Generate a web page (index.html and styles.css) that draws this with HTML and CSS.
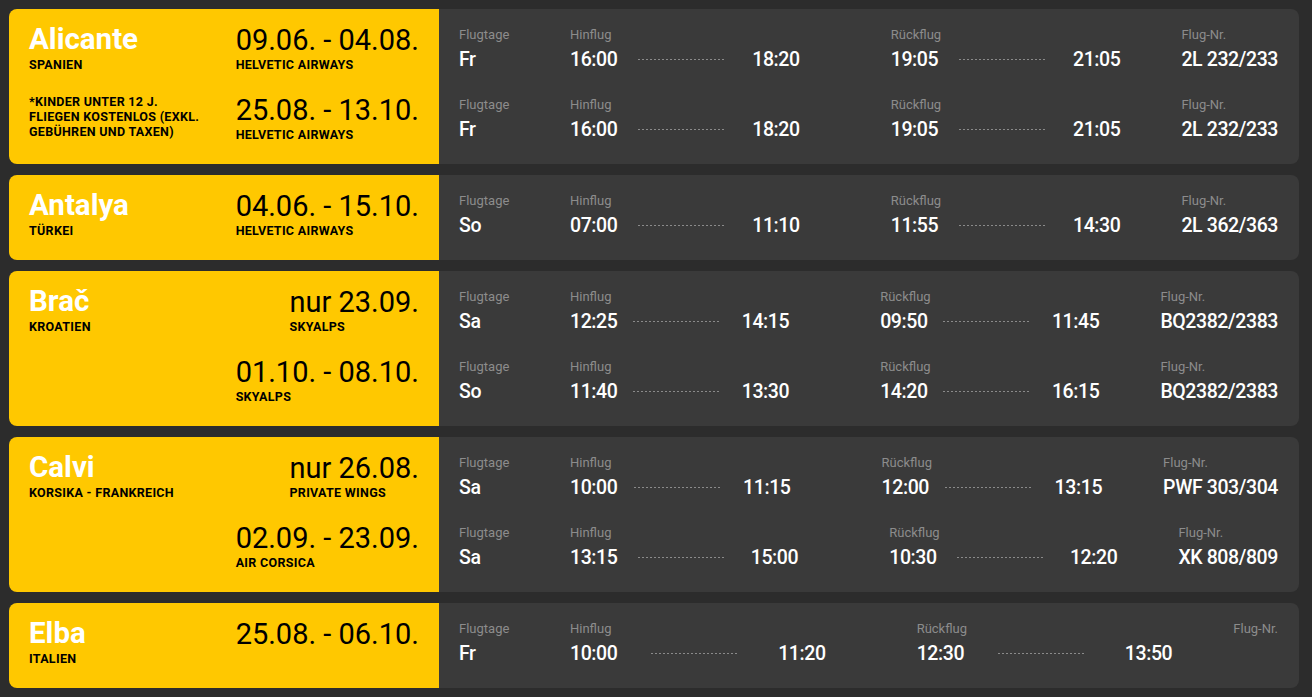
FILE: index.html
```html
<!DOCTYPE html>
<html lang="de">
<head>
<meta charset="utf-8">
<title>Flugplan</title>
<link rel="stylesheet" href="styles.css">
</head>
<body>
<main class="schedule">

  <article class="route">
    <div class="route-info">
      <div class="info-row">
        <div class="place"><h2 class="city">Alicante</h2><p class="country">SPANIEN</p></div>
        <div class="period"><p class="dates">09.06. - 04.08.</p><p class="airline">HELVETIC AIRWAYS</p></div>
      </div>
      <div class="info-row">
        <p class="note">*KINDER UNTER 12 J.<br>FLIEGEN KOSTENLOS (EXKL.<br>GEBÜHREN UND TAXEN)</p>
        <div class="period"><p class="dates">25.08. - 13.10.</p><p class="airline">HELVETIC AIRWAYS</p></div>
      </div>
    </div>
    <div class="route-flights">
      <div class="flight-row">
        <div class="days"><span class="label">Flugtage</span><span class="value">Fr</span></div>
        <div class="leg out"><span class="label">Hinflug</span><div class="times"><span class="value">16:00</span><span class="dots"></span><span class="value">18:20</span></div></div>
        <div class="leg back"><span class="label">Rückflug</span><div class="times"><span class="value">19:05</span><span class="dots"></span><span class="value">21:05</span></div></div>
        <div class="number"><span class="label">Flug-Nr.</span><span class="value">2L 232/233</span></div>
      </div>
      <div class="flight-row">
        <div class="days"><span class="label">Flugtage</span><span class="value">Fr</span></div>
        <div class="leg out"><span class="label">Hinflug</span><div class="times"><span class="value">16:00</span><span class="dots"></span><span class="value">18:20</span></div></div>
        <div class="leg back"><span class="label">Rückflug</span><div class="times"><span class="value">19:05</span><span class="dots"></span><span class="value">21:05</span></div></div>
        <div class="number"><span class="label">Flug-Nr.</span><span class="value">2L 232/233</span></div>
      </div>
    </div>
  </article>

  <article class="route">
    <div class="route-info">
      <div class="info-row">
        <div class="place"><h2 class="city">Antalya</h2><p class="country">TÜRKEI</p></div>
        <div class="period"><p class="dates">04.06. - 15.10.</p><p class="airline">HELVETIC AIRWAYS</p></div>
      </div>
    </div>
    <div class="route-flights">
      <div class="flight-row">
        <div class="days"><span class="label">Flugtage</span><span class="value">So</span></div>
        <div class="leg out"><span class="label">Hinflug</span><div class="times"><span class="value">07:00</span><span class="dots"></span><span class="value">11:10</span></div></div>
        <div class="leg back"><span class="label">Rückflug</span><div class="times"><span class="value">11:55</span><span class="dots"></span><span class="value">14:30</span></div></div>
        <div class="number"><span class="label">Flug-Nr.</span><span class="value">2L 362/363</span></div>
      </div>
    </div>
  </article>

  <article class="route">
    <div class="route-info">
      <div class="info-row">
        <div class="place"><h2 class="city">Brač</h2><p class="country">KROATIEN</p></div>
        <div class="period"><p class="dates">nur 23.09.</p><p class="airline">SKYALPS</p></div>
      </div>
      <div class="info-row">
        <div class="period"><p class="dates">01.10. - 08.10.</p><p class="airline">SKYALPS</p></div>
      </div>
    </div>
    <div class="route-flights">
      <div class="flight-row">
        <div class="days"><span class="label">Flugtage</span><span class="value">Sa</span></div>
        <div class="leg out"><span class="label">Hinflug</span><div class="times"><span class="value">12:25</span><span class="dots"></span><span class="value">14:15</span></div></div>
        <div class="leg back"><span class="label">Rückflug</span><div class="times"><span class="value">09:50</span><span class="dots"></span><span class="value">11:45</span></div></div>
        <div class="number"><span class="label">Flug-Nr.</span><span class="value">BQ2382/2383</span></div>
      </div>
      <div class="flight-row">
        <div class="days"><span class="label">Flugtage</span><span class="value">So</span></div>
        <div class="leg out"><span class="label">Hinflug</span><div class="times"><span class="value">11:40</span><span class="dots"></span><span class="value">13:30</span></div></div>
        <div class="leg back"><span class="label">Rückflug</span><div class="times"><span class="value">14:20</span><span class="dots"></span><span class="value">16:15</span></div></div>
        <div class="number"><span class="label">Flug-Nr.</span><span class="value">BQ2382/2383</span></div>
      </div>
    </div>
  </article>

  <article class="route">
    <div class="route-info">
      <div class="info-row">
        <div class="place"><h2 class="city">Calvi</h2><p class="country">KORSIKA - FRANKREICH</p></div>
        <div class="period"><p class="dates">nur 26.08.</p><p class="airline">PRIVATE WINGS</p></div>
      </div>
      <div class="info-row">
        <div class="period"><p class="dates">02.09. - 23.09.</p><p class="airline">AIR CORSICA</p></div>
      </div>
    </div>
    <div class="route-flights">
      <div class="flight-row">
        <div class="days"><span class="label">Flugtage</span><span class="value">Sa</span></div>
        <div class="leg out"><span class="label">Hinflug</span><div class="times"><span class="value">10:00</span><span class="dots"></span><span class="value">11:15</span></div></div>
        <div class="leg back"><span class="label">Rückflug</span><div class="times"><span class="value">12:00</span><span class="dots"></span><span class="value">13:15</span></div></div>
        <div class="number"><span class="label">Flug-Nr.</span><span class="value">PWF 303/304</span></div>
      </div>
      <div class="flight-row">
        <div class="days"><span class="label">Flugtage</span><span class="value">Sa</span></div>
        <div class="leg out"><span class="label">Hinflug</span><div class="times"><span class="value">13:15</span><span class="dots"></span><span class="value">15:00</span></div></div>
        <div class="leg back"><span class="label">Rückflug</span><div class="times"><span class="value">10:30</span><span class="dots"></span><span class="value">12:20</span></div></div>
        <div class="number"><span class="label">Flug-Nr.</span><span class="value">XK 808/809</span></div>
      </div>
    </div>
  </article>

  <article class="route">
    <div class="route-info">
      <div class="info-row">
        <div class="place"><h2 class="city">Elba</h2><p class="country">ITALIEN</p></div>
        <div class="period"><p class="dates">25.08. - 06.10.</p></div>
      </div>
    </div>
    <div class="route-flights">
      <div class="flight-row">
        <div class="days"><span class="label">Flugtage</span><span class="value">Fr</span></div>
        <div class="leg out"><span class="label">Hinflug</span><div class="times"><span class="value">10:00</span><span class="dots"></span><span class="value">11:20</span></div></div>
        <div class="leg back"><span class="label">Rückflug</span><div class="times"><span class="value">12:30</span><span class="dots"></span><span class="value">13:50</span></div></div>
        <div class="number"><span class="label">Flug-Nr.</span><span class="value"></span></div>
      </div>
    </div>
  </article>

</main>
</body>
</html>
```
FILE: styles.css
```css
* { box-sizing: border-box; margin: 0; padding: 0; }

html, body { background: #2c2c2c; }

body {
  font-family: Roboto, "Liberation Sans", sans-serif;
  color: #000;
}

.schedule {
  display: flex;
  flex-direction: column;
  gap: 11px;
  padding: 9px 13px 0 9px;
}

.route {
  display: flex;
  border-radius: 8px;
  overflow: hidden;
}

/* yellow destination panel */
.route-info {
  width: 430px;
  flex: none;
  background: #ffc800;
  padding: 8px 20px 7px;
}

.info-row {
  height: 70px;
  display: flex;
  justify-content: space-between;
  padding-top: 7px;
}

.period {
  margin-left: auto;
  padding-top: 1px;
}

.city {
  font-size: 29.5px;
  line-height: 30px;
  font-weight: 700;
  color: #fff;
}

.country,
.airline,
.note {
  font-size: 12.5px;
  line-height: 14px;
  font-weight: 700;
  letter-spacing: 0.3px;
  color: #000;
}

.country { margin-top: 4px; }
.airline { margin-top: 3px; }
.note { line-height: 15px; }

.dates {
  font-size: 29px;
  line-height: 30px;
  font-weight: 400;
  color: #000;
  white-space: nowrap;
}

/* dark flight panel */
.route-flights {
  flex: 1;
  background: #3a3a3a;
  padding: 8px 21px 7px 20px;
}

.flight-row {
  height: 70px;
  display: flex;
  padding-top: 10px;
}

.label {
  display: block;
  font-size: 13px;
  line-height: 16px;
  color: #8c8c8c;
  white-space: nowrap;
}

.value {
  display: block;
  min-height: 22px;
  margin-top: 6px;
  font-size: 19.5px;
  line-height: 22px;
  font-weight: 500;
  color: #fff;
  letter-spacing: -0.4px;
  white-space: nowrap;
}

.days {
  width: 111px;
  flex: none;
}

.leg { flex: 1; min-width: 0; }
.leg.out { margin-right: 91px; }
.leg.back { margin-right: 61px; }

.times {
  display: flex;
  justify-content: space-between;
  align-items: center;
  margin-top: 6px;
}

.times .value { margin-top: 0; }

.dots {
  width: 88px;
  height: 1px;
  margin-right: 5px;
  margin-bottom: 2px;
  background: linear-gradient(to right, #8a8a8a 2px, transparent 2px) 0 0 / 4px 1px repeat-x;
}

.number { flex: none; }
```
